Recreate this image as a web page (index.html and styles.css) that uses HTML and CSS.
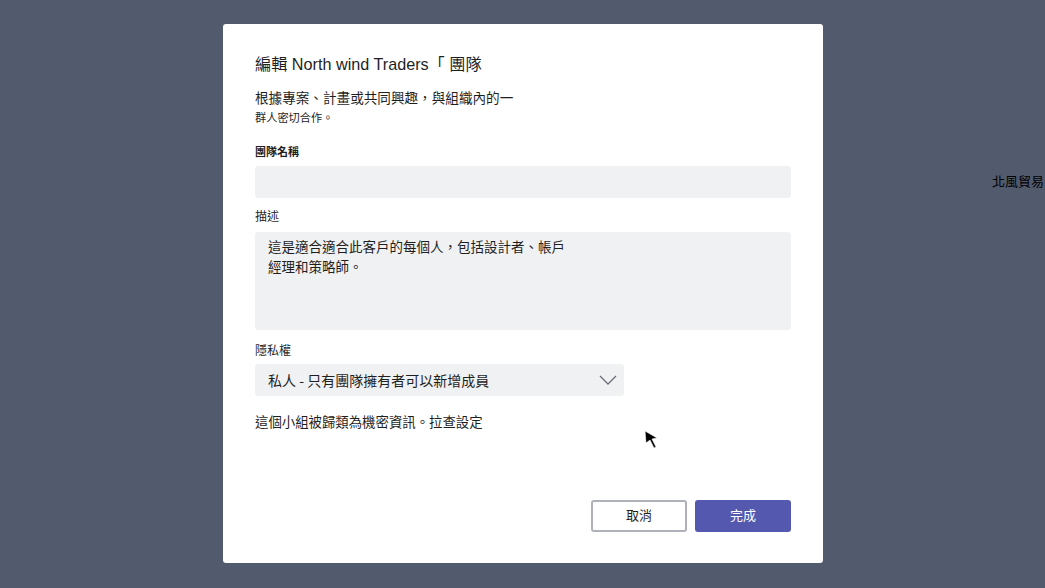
FILE: index.html
```html
<!DOCTYPE html>
<html lang="zh-Hant">
<head>
    <meta charset="UTF-8">
    <title>編輯團隊</title>
    <link rel="stylesheet" href="styles.css">
</head>
<body>
    <div class="stage">
        <div class="dialog">
            <h1 class="title">編輯 North wind Traders「 團隊</h1>
            <p class="intro">
                <span class="intro-line">根據專案、計畫或共同興趣，與組織內的一</span>
                <span class="intro-line small">群人密切合作。</span>
            </p>

            <label class="field-label bold">團隊名稱</label>
            <div class="input"></div>

            <label class="field-label desc-label">描述</label>
            <div class="textarea">這是適合適合此客戶的每個人，包括設計者、帳戶<br>經理和策略師。</div>

            <label class="field-label privacy-label">隱私權</label>
            <div class="select">
                <span>私人 - 只有團隊擁有者可以新增成員</span>
                <svg class="chevron" width="18" height="10" viewBox="0 0 18 10">
                    <path d="M1 1 L9 9 L17 1" fill="none" stroke="#6e7079" stroke-width="1.3"/>
                </svg>
            </div>

            <p class="note">這個小組被歸類為機密資訊。拉查設定</p>

            <div class="actions">
                <button class="btn btn-cancel">取消</button>
                <button class="btn btn-done">完成</button>
            </div>

            <svg class="cursor" width="16" height="20" viewBox="0 0 16 20">
                <path d="M1 1 L13 8 L8 9 L12 17 L10 18 L6 10 L2 13 Z" fill="#000" stroke="#fff" stroke-width="0.6"/>
            </svg>
        </div>
        <div class="side-text">北風貿易</div>
    </div>
</body>
</html>
```

FILE: styles.css
```css
body {
    margin: 0;
    padding: 0;
    background-color: #525a6e;
    font-family: "Noto Sans CJK TC", "Liberation Sans", sans-serif;
    color: #1f1f1f;
    height: 588px;
    overflow: hidden;
}

.stage {
    display: flex;
    align-items: flex-start;
}

.dialog {
    position: relative;
    box-sizing: border-box;
    width: 600px;
    height: 539px;
    margin: 24px 0 0 223px;
    padding: 28px 32px 31px 32px;
    background-color: #ffffff;
    border-radius: 3px;
    display: flex;
    flex-direction: column;
}

.title {
    margin: 0;
    font-size: 16.2px;
    font-weight: normal;
    line-height: 24px;
    font-family: "Liberation Sans", "Noto Sans CJK TC", sans-serif;
}

.intro {
    margin: 11px 0 0 0;
    font-size: 13.6px;
    line-height: 20px;
}

.intro-line {
    display: block;
}

.intro-line.small {
    font-size: 11.2px;
}

.field-label {
    display: block;
    font-size: 11px;
    line-height: 16px;
    margin-top: 16px;
}

.field-label.bold {
    font-weight: bold;
}

.desc-label {
    font-size: 12px;
    margin-top: 10px;
}

.privacy-label {
    font-size: 12px;
    margin-top: 12px;
}

.input {
    margin-top: 7px;
    height: 32px;
    background-color: #f0f1f3;
    border-radius: 3px;
}

.textarea {
    margin-top: 8px;
    box-sizing: border-box;
    height: 98px;
    padding: 4px 13px;
    font-size: 13.5px;
    line-height: 20px;
    background-color: #f0f1f3;
    border-radius: 3px;
}

.select {
    margin-top: 6px;
    width: 369px;
    height: 32px;
    box-sizing: border-box;
    padding: 0 7px 0 13px;
    display: flex;
    align-items: center;
    justify-content: space-between;
    font-size: 14px;
    background-color: #f0f1f3;
    border-radius: 3px;
}

.note {
    margin: 15px 0 0 0;
    font-size: 13.4px;
    line-height: 20px;
}

.actions {
    margin-top: auto;
    display: flex;
    justify-content: flex-end;
    gap: 8px;
}

.btn {
    width: 96px;
    height: 32px;
    box-sizing: border-box;
    padding: 0 0 3px 0;
    border-radius: 3px;
    font-family: "Noto Sans CJK TC", sans-serif;
    font-size: 13px;
    cursor: pointer;
}

.btn-cancel {
    background-color: #ffffff;
    border: 2px solid #aeb1ba;
    color: #1f1f1f;
}

.btn-done {
    background-color: #5558af;
    border: none;
    color: #ffffff;
}

.cursor {
    position: absolute;
    left: 421px;
    top: 406px;
}

.side-text {
    margin: 172px 0 0 169px;
    font-size: 13px;
    line-height: 18px;
    color: #000000;
    white-space: nowrap;
}
```
